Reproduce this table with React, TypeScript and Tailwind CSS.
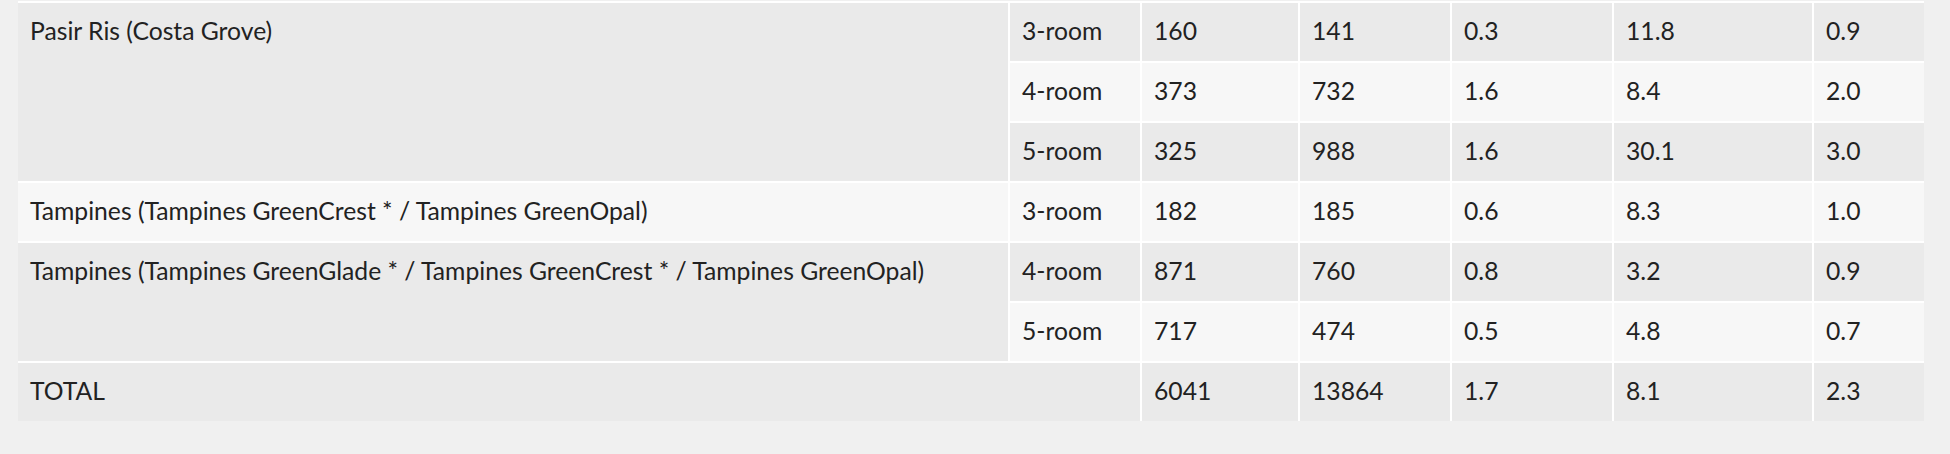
import React from "react";

type Row = { name?: string; span?: number; type: string; vals: string[] };

const rows: Row[] = [
  { name: "Pasir Ris (Costa Grove)", span: 3, type: "3-room", vals: ["160", "141", "0.3", "11.8", "0.9"] },
  { type: "4-room", vals: ["373", "732", "1.6", "8.4", "2.0"] },
  { type: "5-room", vals: ["325", "988", "1.6", "30.1", "3.0"] },
  { name: "Tampines (Tampines GreenCrest * / Tampines GreenOpal)", span: 1, type: "3-room", vals: ["182", "185", "0.6", "8.3", "1.0"] },
  {
    name: "Tampines (Tampines GreenGlade * / Tampines GreenCrest * / Tampines GreenOpal)",
    span: 2,
    type: "4-room",
    vals: ["871", "760", "0.8", "3.2", "0.9"],
  },
  { type: "5-room", vals: ["717", "474", "0.5", "4.8", "0.7"] },
];

const cell = "pl-[12px] pt-[10px] pb-[12px] leading-[36px] whitespace-nowrap";

export default function App() {
  return (
    <div
      className="w-[1950px] h-[454px] bg-[#f0f0f0] pl-[18px] pt-[1px] text-[#222] text-[24.7px]"
      style={{ fontFamily: "Lato, 'Liberation Sans', sans-serif" }}
    >
      <div className="grid w-[1906px] grid-cols-[990px_130px_156px_150px_160px_198px_110px] auto-rows-[58px] gap-[2px] bg-white pt-[2px]">
        {rows.map((r, i) => {
          const bg = i % 2 === 0 ? "bg-[#eaeaea]" : "bg-[#f7f7f7]";
          return (
            <React.Fragment key={i}>
              {r.name && (
                <div
                  className={`${cell} ${bg} ${
                    r.span === 3 ? "row-span-3" : r.span === 2 ? "row-span-2" : ""
                  }`}
                >
                  {r.name}
                </div>
              )}
              <div className={`${cell} ${bg}`}>{r.type}</div>
              {r.vals.map((v, j) => (
                <div key={j} className={`${cell} ${bg}`}>
                  {v}
                </div>
              ))}
            </React.Fragment>
          );
        })}
        <div className={`${cell} bg-[#eaeaea] col-span-2`}>TOTAL</div>
        {["6041", "13864", "1.7", "8.1", "2.3"].map((v, j) => (
          <div key={j} className={`${cell} bg-[#eaeaea]`}>
            {v}
          </div>
        ))}
      </div>
    </div>
  );
}
